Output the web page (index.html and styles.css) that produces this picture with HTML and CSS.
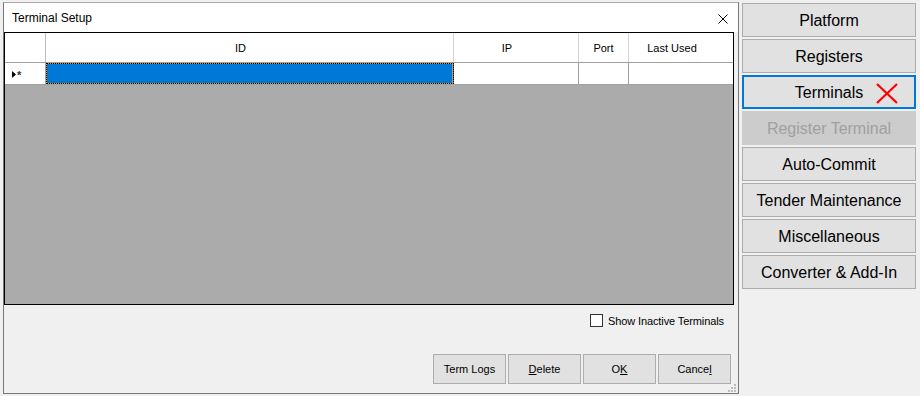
FILE: index.html
```html
<!DOCTYPE html>
<html lang="en">
<head>
<meta charset="UTF-8" />
<title>Terminal Setup</title>
<link rel="stylesheet" href="styles.css">
</head>
<body>

<div class="screen">

	<div class="dialog">

		<div class="titlebar">
			<span class="title">Terminal Setup</span>
			<svg class="close" width="10" height="10" viewBox="0 0 10 10">
				<path d="M0.5 0.5 L9.5 9.5 M9.5 0.5 L0.5 9.5" stroke="#000" stroke-width="1" fill="none" />
			</svg>
		</div>

		<div class="grid">
			<div class="row head">
				<div class="cell rowhdr"></div>
				<div class="cell sortable">ID</div>
				<div class="cell sortable">IP</div>
				<div class="cell">Port</div>
				<div class="cell sortable last">Last Used</div>
			</div>
			<div class="row data">
				<div class="cell rowhdr">
					<svg class="arrow" width="4" height="7" viewBox="0 0 4 7"><polygon points="0,0 4,3.5 0,7" fill="#000" /></svg><span class="star">*</span>
				</div>
				<div class="cell selected"></div>
				<div class="cell"></div>
				<div class="cell"></div>
				<div class="cell last"></div>
			</div>
		</div>

		<div class="options">
			<label class="check"><span class="box"></span>Show Inactive Terminals</label>
		</div>

		<div class="actions">
			<button class="btn">Term Logs</button>
			<button class="btn"><u>D</u>elete</button>
			<button class="btn">O<u>K</u></button>
			<button class="btn">Cance<u>l</u></button>
		</div>

		<!-- size grip -->
		<svg class="grip" width="9" height="9" viewBox="0 0 9 9">
			<rect x="6" y="0" width="2" height="2" fill="#bcbcbc" />
			<rect x="3" y="3" width="2" height="2" fill="#bcbcbc" />
			<rect x="6" y="3" width="2" height="2" fill="#bcbcbc" />
			<rect x="0" y="6" width="2" height="2" fill="#bcbcbc" />
			<rect x="3" y="6" width="2" height="2" fill="#bcbcbc" />
			<rect x="6" y="6" width="2" height="2" fill="#bcbcbc" />
		</svg>
	</div>

	<div class="side">
		<button class="nav">Platform</button>
		<button class="nav">Registers</button>
		<button class="nav active">Terminals
			<svg class="mark" width="22" height="21" viewBox="0 0 22 21">
				<path d="M1 1 L21 20 M21 1 L1 20" stroke="#f00" stroke-width="2.2" fill="none" />
			</svg>
		</button>
		<button class="nav" disabled>Register Terminal</button>
		<button class="nav">Auto-Commit</button>
		<button class="nav">Tender Maintenance</button>
		<button class="nav">Miscellaneous</button>
		<button class="nav">Converter &amp; Add-In</button>
	</div>

</div>

</body>
</html>
```

FILE: styles.css
```css
body
{
	margin: 0;
	background-color: #f0f0f0;
	font-family: "Liberation Sans", Arial, sans-serif;
	color: #000;
}

.screen
{
	display: flex;
	align-items: flex-start;
	padding: 2px 0 0 3px;
}

/* dialog window */
.dialog
{
	position: relative;
	box-sizing: border-box;
	width: 736px;
	height: 392px;
	border: 1px solid #777;
	border-top-color: #a8a8a8;
	background-color: #f0f0f0;
	display: flex;
	flex-direction: column;
}

.titlebar
{
	height: 29px;
	flex: none;
	background-color: #fff;
	display: flex;
	align-items: center;
	justify-content: space-between;
	padding: 0 10px 0 8px;
}

.title
{
	font-size: 12px;
	margin-top: 1px;
}

.close
{
	margin-top: 2px;
}

/* data grid */
.grid
{
	box-sizing: border-box;
	width: 730px;
	height: 273px;
	flex: none;
	border: 1px solid #000;
	background-color: #ababab;
}

.row
{
	display: grid;
	grid-template-columns: 41px 408px 125px 50px 1fr;
	background-color: #fff;
	box-sizing: border-box;
	border-bottom: 1px solid #a0a0a0;
}

.head
{
	height: 30px;
}

.data
{
	height: 22px;
}

.cell
{
	box-sizing: border-box;
	border-right: 1px solid #a0a0a0;
	font-size: 11px;
	display: flex;
	align-items: center;
	justify-content: center;
}

.head .cell
{
	border-right-color: #d4d4d4;
}

.head .rowhdr
{
	border-right-color: #bdbdbd;
}

/* room kept for the sort glyph */
.head .sortable
{
	padding-right: 18px;
}

.cell.last
{
	border-right: none;
}

.data .rowhdr
{
	justify-content: flex-start;
	padding: 2px 0 0 7px;
}

.arrow
{
	margin-right: 1px;
}

.star
{
	font-size: 11px;
	font-weight: bold;
	color: #333;
	line-height: 7px;
	height: 5px;
}

.selected
{
	background-color: #0078d7;
	box-shadow: inset 0 0 0 1px #e3922e;
	outline: 1px dotted #000;
	outline-offset: -1px;
	border-right-color: #0078d7;
}

/* footer */
.options
{
	display: flex;
	justify-content: flex-end;
	padding: 9px 14px 0 0;
}

.check
{
	display: flex;
	align-items: center;
	gap: 5px;
	font-size: 11px;
	letter-spacing: -0.1px;
}

.box
{
	box-sizing: border-box;
	width: 13px;
	height: 13px;
	border: 1px solid #333;
	background-color: #fff;
}

.actions
{
	margin-top: auto;
	display: flex;
	justify-content: flex-end;
	gap: 2px;
	padding: 0 7px 9px 0;
}

.btn
{
	box-sizing: border-box;
	width: 73px;
	height: 30px;
	border: 1px solid #adadad;
	background-color: #e1e1e1;
	font-family: "Liberation Sans", Arial, sans-serif;
	font-size: 11px;
	color: #000;
	padding: 0;
}

.grip
{
	position: absolute;
	right: 1px;
	bottom: 0;
}

/* right hand menu */
.side
{
	display: flex;
	flex-direction: column;
	gap: 2px;
	margin: 1px 0 0 3px;
}

.nav
{
	position: relative;
	box-sizing: border-box;
	width: 174px;
	height: 34px;
	border: 1px solid #adadad;
	background-color: #e1e1e1;
	font-family: "Liberation Sans", Arial, sans-serif;
	font-size: 16px;
	color: #000;
	padding: 1px 0 0;
}

.nav.active
{
	border: 2px solid #0078d7;
}

.nav:disabled
{
	background-color: #cccccc;
	border-color: #cccccc;
	color: #a0a0a0;
}

.mark
{
	position: absolute;
	right: 16px;
	top: 6px;
}
```
